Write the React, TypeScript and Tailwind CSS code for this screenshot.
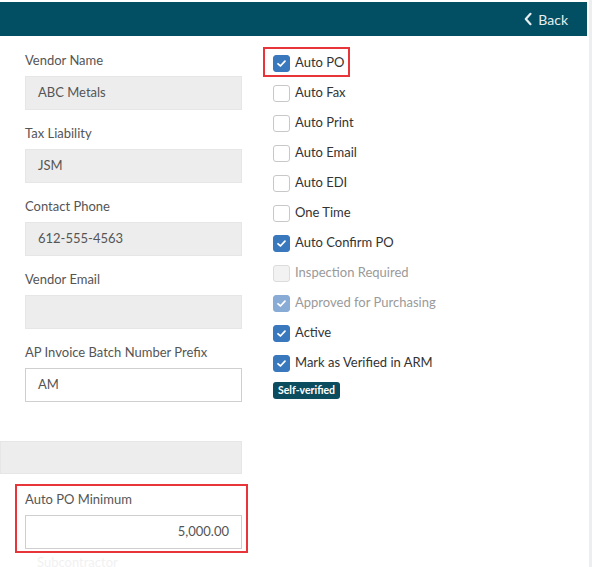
import React from "react";

const font = { fontFamily: '"Source Sans Pro", Lato, "Open Sans", sans-serif' };

function Field({ label, value, disabled = true, align = "left" }: { label: string; value: string; disabled?: boolean; align?: "left" | "right" }) {
  return (
    <div className="flex flex-col">
      <div className="h-[19px] leading-[19px] text-[13px] text-[#555] mb-[6px]">{label}</div>
      <div
        className={
          "h-[34px] w-[217px] flex items-center px-[12px] text-[13px] text-[#555] " +
          (disabled ? "bg-[#ededed] border border-[#e6e6e6] " : "bg-white border border-[#cfcfcf] ") +
          (align === "right" ? "justify-end" : "")
        }
      >
        {value}
      </div>
    </div>
  );
}

function Check({ label, checked, disabled = false }: { label: string; checked: boolean; disabled?: boolean }) {
  let box = "bg-white border border-[#c8c8c8]";
  if (checked && !disabled) box = "bg-[#3a78bd] border border-[#3a78bd]";
  if (checked && disabled) box = "bg-[#88acd6] border border-[#88acd6]";
  if (!checked && disabled) box = "bg-[#f2f2f2] border border-[#dcdcdc]";
  return (
    <div className="h-[30px] flex items-center">
      <div className={"w-[17px] h-[17px] rounded-[3px] flex items-center justify-center " + box}>
        {checked && (
          <svg width="11" height="11" viewBox="0 0 12 12" fill="none">
            <path d="M2.2 6.3 L4.8 8.7 L9.8 3.4" stroke="white" strokeWidth="1.9" strokeLinecap="round" strokeLinejoin="round" />
          </svg>
        )}
      </div>
      <span className={"ml-[5px] text-[13px] " + (disabled ? "text-[#9a9a9a]" : "text-[#333]")}>{label}</span>
    </div>
  );
}

export default function App() {
  return (
    <div className="w-[592px] h-[567px] overflow-hidden bg-white flex" style={font}>
      <div className="w-[587px] flex flex-col">
        <div className="shrink-0 mt-[2px] h-[34px] bg-[#024f63] flex items-center justify-end pr-[19px]">
          <div className="flex items-center text-[#e6eef0] text-[14px]">
            <svg width="10" height="14" viewBox="0 0 10 14" className="mr-[5px]">
              <path d="M7.5 1.8 L2.8 7 L7.5 12.2" stroke="#e6eef0" strokeWidth="2.2" fill="none" strokeLinecap="round" strokeLinejoin="round" />
            </svg>
            Back
          </div>
        </div>
        <div className="flex shrink-0">
          {/* Left column */}
          <div className="w-[242px] flex flex-col pt-[15px]">
            <div className="pl-[25px] flex flex-col gap-[14px]">
              <Field label="Vendor Name" value="ABC Metals" />
              <Field label="Tax Liability" value="JSM" />
              <Field label="Contact Phone" value="612-555-4563" />
              <Field label="Vendor Email" value="" />
              <Field label="AP Invoice Batch Number Prefix" value="AM" disabled={false} />
            </div>
            <div className="mt-[39px] h-[33px] bg-[#ededed] border border-[#e6e6e6]" />
            <div className="relative mt-[10px] pl-[25px] pt-[6px]">
              <div className="absolute left-[15px] top-0 w-[233px] h-[69px] border-2 border-[#e8353a] pointer-events-none" />
              <Field label="Auto PO Minimum" value="5,000.00" disabled={false} align="right" />
              <div className="mt-[4px] h-[19px] leading-[19px] text-[13px] text-[#f1f1f1] pl-[12px]">Subcontractor</div>
            </div>
          </div>
          {/* Right column */}
          <div className="ml-[31px] pt-[12px] flex flex-col">
            <div className="relative">
              <div className="absolute left-[-10px] top-[-1px] w-[87px] h-[30px] border-2 border-[#e8353a] pointer-events-none" />
              <Check label="Auto PO" checked />
            </div>
            <Check label="Auto Fax" checked={false} />
            <Check label="Auto Print" checked={false} />
            <Check label="Auto Email" checked={false} />
            <Check label="Auto EDI" checked={false} />
            <Check label="One Time" checked={false} />
            <Check label="Auto Confirm PO" checked />
            <Check label="Inspection Required" checked={false} disabled />
            <Check label="Approved for Purchasing" checked disabled />
            <Check label="Active" checked />
            <Check label="Mark as Verified in ARM" checked />
            <div className="mt-[4px] self-start h-[17px] px-[5px] rounded-[3px] bg-[#0b4c5f] text-white text-[10.5px] font-bold flex items-center">
              Self-verified
            </div>
          </div>
        </div>
      </div>
      <div className="ml-[2px] w-[3px] bg-[#eceef0]" />
    </div>
  );
}
